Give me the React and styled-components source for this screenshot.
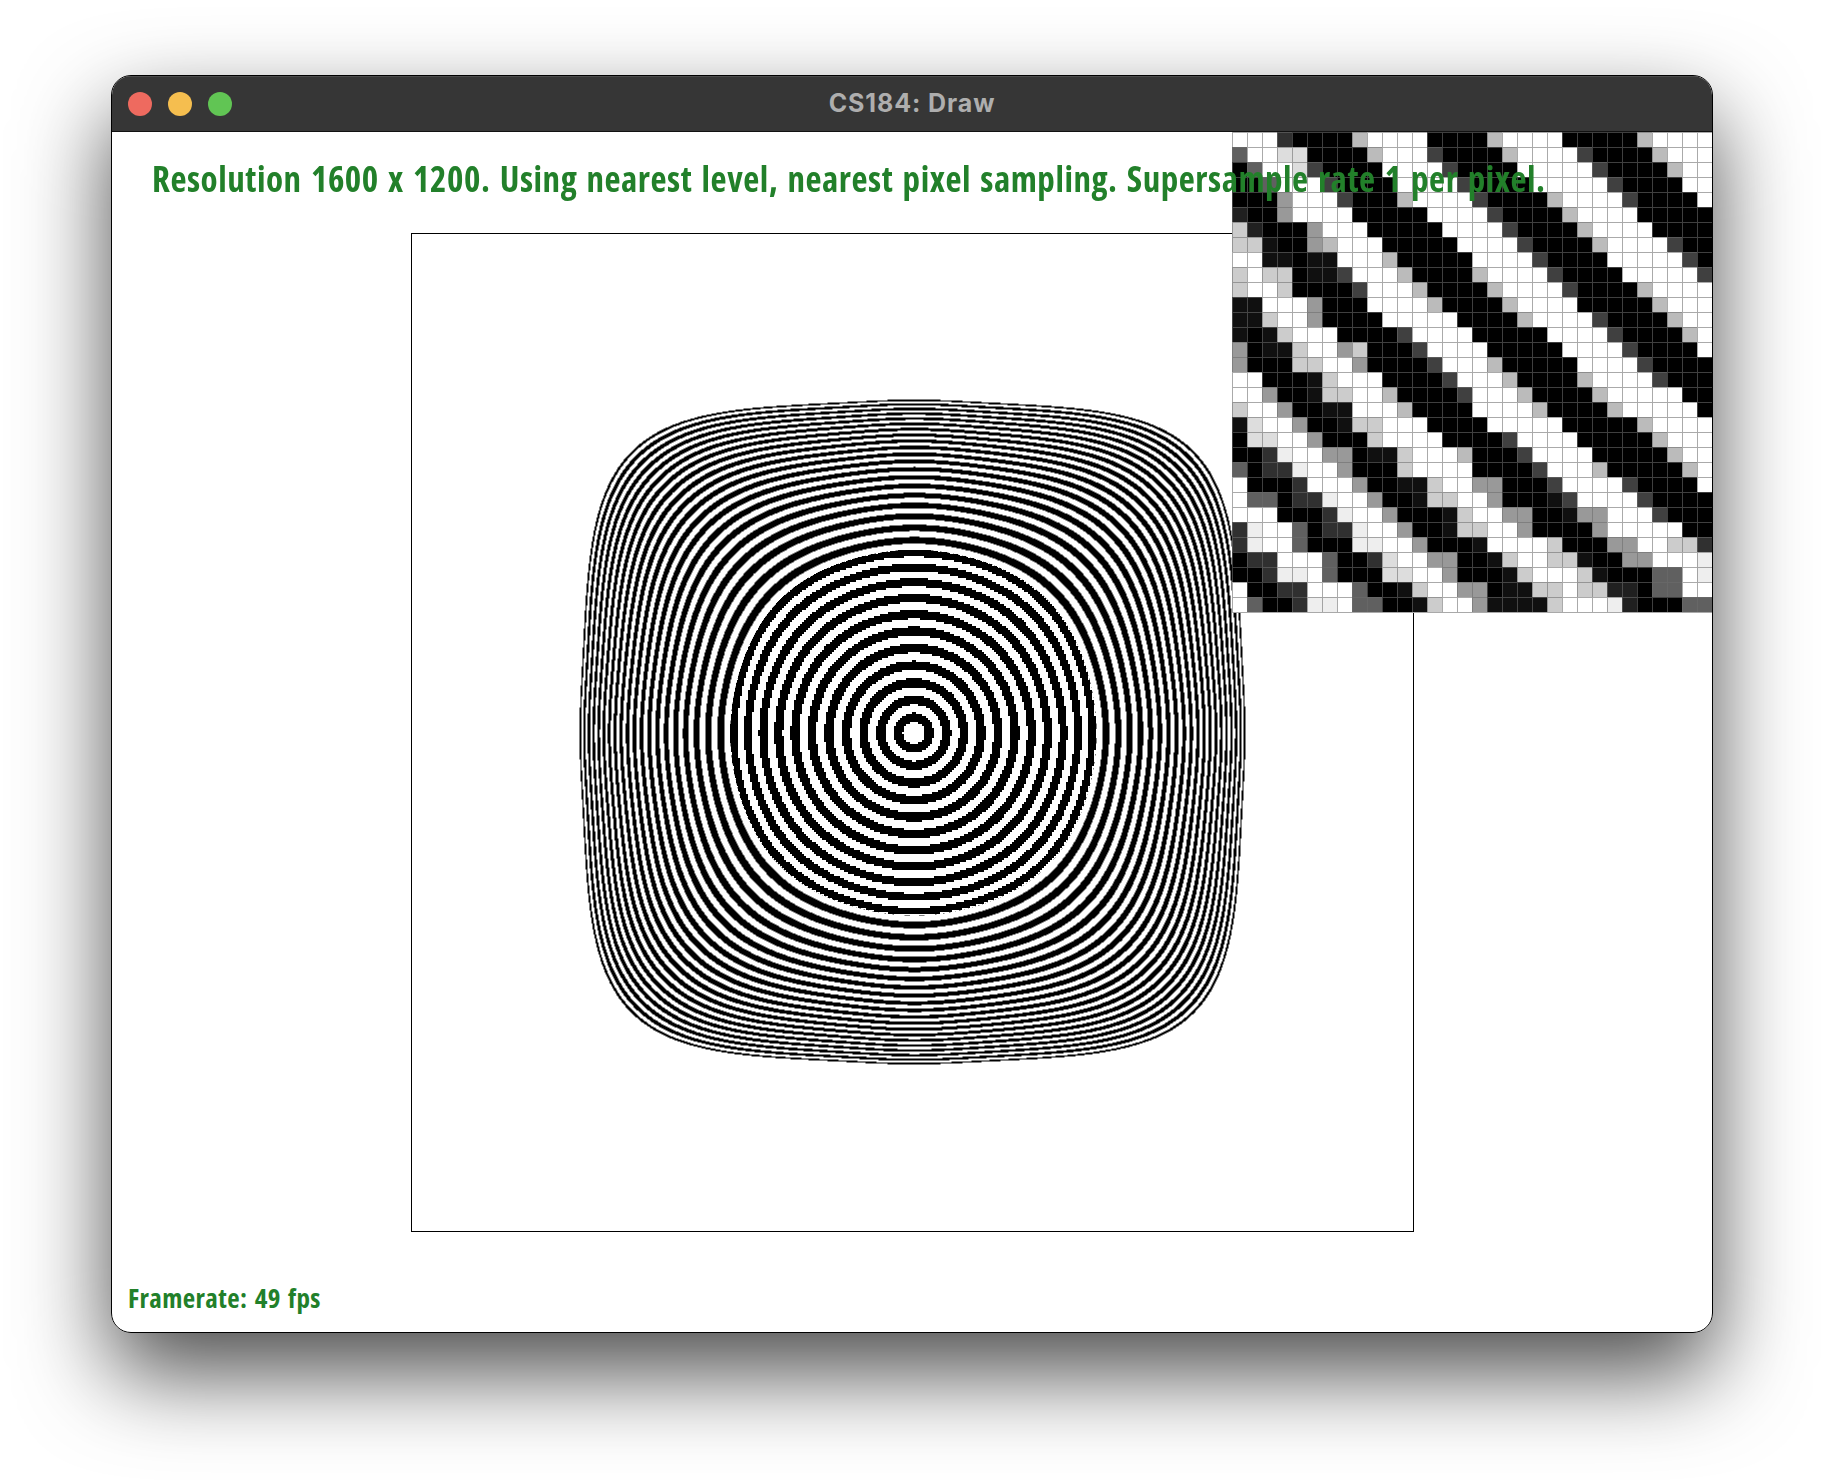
import { useLayoutEffect, useRef } from "react";
import styled, { createGlobalStyle } from "styled-components";

const GlobalStyle = createGlobalStyle`
    html, body {
        margin: 0;
        padding: 0;
        background: #ffffff;
    }
`;

const Page = styled.div`
    width: 1824px;
    height: 1480px;
    padding-top: 75px;
    box-sizing: border-box;
    display: flex;
    justify-content: center;
    align-items: flex-start;
    overflow: hidden;
`;

const Window = styled.div`
    width: 1602px;
    height: 1258px;
    box-sizing: border-box;
    border: 1px solid #000000;
    border-radius: 20px;
    overflow: hidden;
    background: #ffffff;
`;

const WindowShadow = styled.div`
    border-radius: 20px;
    box-shadow: 0 40px 90px rgba(0, 0, 0, 0.7);
`;

const TitleBar = styled.div`
    position: relative;
    height: 56px;
    padding-bottom: 2px;
    background: #363636;
    border-top: 1px solid #4c4c4c;
    box-sizing: border-box;
    border-bottom: 1px solid #111111;
    display: flex;
    align-items: center;
    justify-content: center;
`;

const Lights = styled.div`
    position: absolute;
    left: 16px;
    top: 15px;
    display: flex;
    gap: 16px;
`;

const Light = styled.span`
    width: 24px;
    height: 24px;
    border-radius: 50%;
    background: ${(p) => p.$color};
`;

const Title = styled.div`
    font-family: Inter, "Liberation Sans", sans-serif;
    font-size: 25px;
    font-weight: 700;
    letter-spacing: 0.9px;
    color: #aeaeae;
`;

const Content = styled.main`
    position: relative;
    height: 1200px;
    display: flex;
    justify-content: center;
    align-items: center;
`;

const Frame = styled.div`
    width: 1003px;
    height: 999px;
    box-sizing: border-box;
    border: 1px solid #000000;
`;

const RingCanvas = styled.canvas`
    display: block;
`;

const StatusText = styled.div`
    position: absolute;
    font-family: "Open Sans", "Liberation Sans Narrow", sans-serif;
    font-stretch: 75%;
    font-weight: 700;
    color: #22802a;
    white-space: nowrap;
`;

const Resolution = styled(StatusText)`
    left: 40px;
    top: 23px;
    font-size: 35px;
    line-height: 48px;
    letter-spacing: 0.53px;
    word-spacing: 2.5px;
`;

const Framerate = styled(StatusText)`
    left: 16px;
    bottom: 16px;
    font-size: 27px;
    line-height: 36px;
    letter-spacing: 0.4px;
    word-spacing: 2px;
`;

const ZoomInset = styled.div`
    position: absolute;
    top: 0;
    right: 0;
    width: 480px;
    display: grid;
    grid-template-columns: repeat(32, 15px);
    grid-auto-rows: 15px;
    background: #ffffff;
    border-bottom: 1px solid #a9a9a9;
`;

const Texel = styled.div`
    background: ${(p) => p.$shade};
    border-left: 1px solid rgba(108, 108, 108, 0.58);
    border-top: 1px solid rgba(108, 108, 108, 0.58);
    box-sizing: border-box;
`;

const SHADES = {
    ".": "#ffffff",
    e: "#eeeeee",
    d: "#dddddd",
    c: "#cccccc",
    b: "#bbbbbb",
    9: "#999999",
    6: "#606060",
    4: "#404040",
    3: "#303030",
    2: "#202020",
    1: "#101010",
    0: "#000000",
};

// magnified pixels under the cursor, one string per row
const ZOOM_ROWS = [
    "...30000b....0000b....00000b....",
    "6..dd0000b...40000b....40000b...",
    "06..d40000....40000.....40000b..",
    "006...40000....40000.....40000..",
    "0009...4000b....40000b....40000.",
    "2009....00000....40000b....00000",
    "c20009...00000....40000b....0000",
    "cc1009b...00000....40000b....400",
    "..11011...b00000....40000.....40",
    "c.cc0114...b0000b....40000.....4",
    "c..c00004...b0000b....40000b....",
    "11...9000....b0000b....00000b...",
    "11c..90000.....0000b....40000b..",
    "101c...00004....00000....40000b.",
    "9011c..9c0004....00000....40000.",
    "9000cc..900004...b00000....40000",
    "..0001c...00004...b0000b....4000",
    "..9001cc..b00004...b0000b.....00",
    "c..90011...b0000....b0000b.....0",
    "1d..9001cc...0000.....00000b....",
    "0dd..9000c....00004....00000b...",
    "003e..99011c...b0004....00000b..",
    "6033e..9000c....00004...b00000b.",
    ".0003...90011c..990004....40000.",
    ".66033e..9001cc..900014....40000",
    "...0003e..90001c..9900199...4000",
    "3e..6033e..9001cc..900009.....00",
    "3e..6000ee..90001....c00099..cc3",
    "033...6003d..99001c..cc10099...e",
    "003ee.6000dd..90001c...c100066.e",
    ".0033...6001c..99011cc.cc22066..",
    ".6003ee.66001c..91111c...e200066",
];

const CENTER_X = 914 - 412;
const CENTER_Y = 733 - 234;

// squircle radius: circles near the middle, rounded square at the rim
const warpRadius = (dx, dy) => {
    const nx = Math.abs(dx) / (dx < 0 ? 335 : 331);
    const ny = Math.abs(dy) / (dy < 0 ? 334 : 331);
    if (nx === 0 && ny === 0) return 0;
    const diag = (2 * nx * ny) / (nx * nx + ny * ny);
    const rimExp = 0.2 + 1.9 * diag * diag;
    let s = Math.max(nx, ny);
    for (let i = 0; i < 5; i++) {
        const k = Math.min(s, 1);
        const exp = 2 + rimExp * k * k * k * k;
        s = Math.pow(Math.pow(nx, exp) + Math.pow(ny, exp), 1 / exp);
    }
    return s;
};

const sampleRings = (dx, dy) => {
    const s = warpRadius(dx, dy);
    if (s > 1) return 255;
    const rings = ((s * 333) / 17.3) * (1 + 0.61 * s * s * s * s);
    if (rings < 0.6) return 255;
    const f = rings + 0.364;
    return f - Math.floor(f) < 0.52 ? 0 : 255;
};

const ringPixel = (px, py) => {
    const dx = px - CENTER_X;
    const dy = py - CENTER_Y;
    if (warpRadius(dx, dy) < 0.55) {
        // texels are about 2px on screen where the texture is magnified
        return sampleRings(Math.floor(px / 2) * 2 + 1 - CENTER_X, Math.floor(py / 2) * 2 + 1 - CENTER_Y);
    }
    return (
        (sampleRings(dx - 0.5, dy - 0.5) +
            sampleRings(dx + 0.5, dy - 0.5) +
            sampleRings(dx - 0.5, dy + 0.5) +
            sampleRings(dx + 0.5, dy + 0.5)) /
        4
    );
};

const RingTexture = ({ width, height }) => {
    const ref = useRef(null);

    useLayoutEffect(() => {
        const ctx = ref.current.getContext("2d");
        const image = ctx.createImageData(width, height);
        for (let y = 0; y < height; y++) {
            for (let x = 0; x < width; x++) {
                const i = (y * width + x) * 4;
                const v = ringPixel(x, y);
                image.data[i] = v;
                image.data[i + 1] = v;
                image.data[i + 2] = v;
                image.data[i + 3] = 255;
            }
        }
        ctx.putImageData(image, 0, 0);
    }, [width, height]);

    return <RingCanvas ref={ref} width={width} height={height} />;
};

export default function App() {
    return (
        <Page>
            <GlobalStyle />
            <WindowShadow>
                <Window>
                    <TitleBar>
                        <Lights>
                            <Light $color="#ee6a5f" />
                            <Light $color="#f5be4f" />
                            <Light $color="#61c554" />
                        </Lights>
                        <Title>CS184: Draw</Title>
                    </TitleBar>
                    <Content>
                        <Frame>
                            <RingTexture width={1001} height={997} />
                        </Frame>
                        <ZoomInset>
                            {ZOOM_ROWS.flatMap((row, r) =>
                                row
                                    .split("")
                                    .map((ch, c) => <Texel key={`${r}-${c}`} $shade={SHADES[ch]} />)
                            )}
                        </ZoomInset>
                        <Resolution>
                            Resolution 1600 x 1200. Using nearest level, nearest pixel sampling. Supersample rate 1 per pixel.
                        </Resolution>
                        <Framerate>Framerate: 49 fps</Framerate>
                    </Content>
                </Window>
            </WindowShadow>
        </Page>
    );
}
